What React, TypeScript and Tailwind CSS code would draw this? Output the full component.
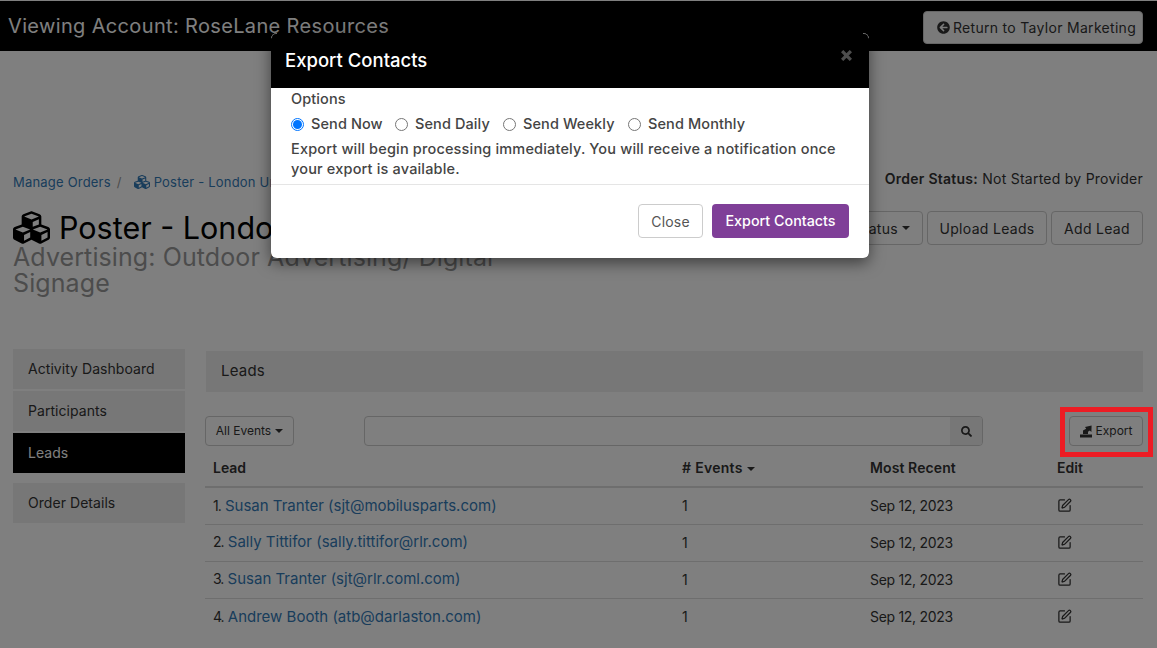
import { FaArrowCircleLeft, FaCubes, FaSearch } from 'react-icons/fa';
import { SquarePen } from 'lucide-react';

const leads = [
  { no: '1.', name: 'Susan Tranter (sjt@mobilusparts.com)' },
  { no: '2.', name: 'Sally Tittifor (sally.tittifor@rlr.com)' },
  { no: '3.', name: 'Susan Tranter (sjt@rlr.coml.com)' },
  { no: '4.', name: 'Andrew Booth (atb@darlaston.com)' },
];

const Caret = () => (
  <span className="inline-block ml-1 align-middle border-x-[4px] border-x-transparent border-t-[4px] border-t-current" />
);

const ExportIcon = () => (
  <svg viewBox="0 0 12 13" className="w-[12px] h-[13px]" fill="currentColor">
    <rect x="0" y="9.5" width="12" height="3" />
    <path d="M3 9 L3 5.4 L6.2 3.8 L5 2 L11.6 0.6 L11.4 7 L9.8 5.6 L8 6.8 L8 9 Z" />
  </svg>
);

const Radio = ({ checked = false }: { checked?: boolean }) =>
  checked ? (
    <span className="w-[13px] h-[13px] rounded-full border border-[#0075ff] mr-[7px] flex items-center justify-center">
      <span className="w-[9px] h-[9px] rounded-full bg-[#0075ff]" />
    </span>
  ) : (
    <span className="w-[13px] h-[13px] rounded-full border border-[#767676] mr-[7px]" />
  );

const App = () => {
  return (
    <div className="relative h-[648px] w-[1157px] overflow-hidden bg-white text-[#333] font-['Inter',sans-serif]">
      {/* Account bar */}
      <div className="mt-px h-[50px] bg-black flex items-center justify-between pl-[8px] pr-[14px]">
        <span className="text-[20px] tracking-[0.35px] text-white">Viewing Account: RoseLane Resources</span>
        <button className="mt-[3px] h-[33px] w-[220px] pl-[13px] rounded border border-[#ccc] bg-[#f5f5f5] text-[14px] tracking-[0.3px] text-[#333] flex items-center gap-[3px]">
          <FaArrowCircleLeft className="w-[13px] h-[13px]" />
          Return to Taylor Marketing
        </button>
      </div>

      <div className="pl-[13px] pr-[14px]">
        {/* Breadcrumb row */}
        <div className="mt-[118px] flex items-start justify-between">
          <div className="mt-[3px] flex items-center text-[#337ab7] text-[13px] tracking-[0.2px] leading-[20px]">
            <span>Manage Orders</span>
            <span className="ml-[6px] mr-[12px] text-[#999]">/</span>
            <FaCubes className="w-[16px] h-[16px] mr-[4px]" />
            <span>Poster - London Underground</span>
          </div>
          <div className="text-[14px] tracking-[0.25px] leading-[20px]">
            <b className="font-semibold">Order Status:</b> Not Started by Provider
          </div>
        </div>

        {/* Title row */}
        <div className="mt-[17px] flex items-start justify-between">
          <div className="w-[510px]">
            <h1 className="flex items-center text-[30.5px] leading-[36px] text-black whitespace-nowrap">
              <FaCubes className="w-[37px] h-[37px] mr-[9px]" />
              Poster - London Underground
            </h1>
            <div className="text-[25px] leading-[26px] tracking-[0.1px] text-[#999] -mt-[2px]">Advertising: Outdoor Advertising/ Digital Signage</div>
          </div>
          <div className="mt-[2px] flex gap-[4px] text-[14px] tracking-[0.3px]">
            <button className="h-[34px] px-[12px] border border-[#ccc] rounded flex items-center">
              Status
              <Caret />
            </button>
            <button className="h-[34px] w-[120px] border border-[#ccc] rounded">Upload Leads</button>
            <button className="h-[34px] w-[92px] border border-[#ccc] rounded">Add Lead</button>
          </div>
        </div>

        {/* Content */}
        <div className="mt-[53px] flex gap-[20px]">
          <div className="w-[172px] shrink-0 text-[14px] tracking-[0.05px]">
            <div className="h-[40px] mb-[2px] px-[15px] pb-[2px] flex items-center bg-[#eee]">Activity Dashboard</div>
            <div className="h-[40px] mb-[2px] px-[15px] pb-[2px] flex items-center bg-[#eee]">Participants</div>
            <div className="h-[40px] px-[15px] pb-[2px] flex items-center bg-black text-white">Leads</div>
            <div className="h-[40px] mt-[10px] px-[15px] pb-[2px] flex items-center bg-[#eee]">Order Details</div>
          </div>

          <div className="flex-1 min-w-0 pt-[2px]">
            <div className="h-[41px] ml-px px-[15px] flex items-center bg-[#eee] text-[15px] tracking-[0.2px]">Leads</div>
            <div className="mt-[24px] flex items-center">
              <button className="h-[30px] w-[89px] border border-[#ccc] rounded text-[12px] flex items-center justify-center">
                All Events
                <Caret />
              </button>
              <div className="ml-[70px] flex w-[619px] h-[30px] border border-[#ccc] rounded overflow-hidden">
                <div className="flex-1" />
                <div className="w-[32px] bg-[#eee] flex items-center justify-center">
                  <FaSearch className="w-[11px] h-[11px]" />
                </div>
              </div>
              <button className="ml-auto h-[30px] w-[74px] border border-[#ccc] rounded text-[12px] flex items-center justify-center gap-[4px]">
                <ExportIcon />
                Export
              </button>
            </div>

            <table className="mt-[3px] w-full text-[14px]">
              <thead>
                <tr className="h-[38px] border-b-2 border-[#ddd] text-left">
                  <th className="pl-[8px] w-[477px] font-semibold">Lead</th>
                  <th className="w-[188px] font-semibold tracking-[0.3px]">
                    # Events
                    <Caret />
                  </th>
                  <th className="w-[187px] font-semibold tracking-[0.1px]">Most Recent</th>
                  <th className="font-semibold">Edit</th>
                </tr>
              </thead>
              <tbody>
                {leads.map((lead) => (
                  <tr key={lead.no} className="h-[37px] border-b border-[#ddd] last:border-b-0">
                    <td className="pl-[8px] text-[15px]">
                      <span className="text-[14px] tracking-[-1px]">{lead.no}</span>{' '}
                      <span className="text-[#337ab7]">{lead.name}</span>
                    </td>
                    <td>1</td>
                    <td className="tracking-[-0.3px]">Sep 12, 2023</td>
                    <td>
                      <SquarePen className="w-[15px] h-[15px]" strokeWidth={2} />
                    </td>
                  </tr>
                ))}
              </tbody>
            </table>
          </div>
        </div>
      </div>

      {/* Backdrop */}
      <div className="absolute inset-0 bg-black/50" />

      {/* Modal */}
      <div className="absolute left-[271px] top-[33px] w-[598px] h-[225px] rounded-md bg-white overflow-hidden shadow-[0_5px_15px_rgba(0,0,0,0.5)]">
        <div className="relative h-[55px] bg-black text-white text-[18.5px] font-medium pl-[14px] pt-[14px]">
          Export Contacts
          <svg viewBox="0 0 10 10" className="absolute left-[570px] top-[17px] w-[11px] h-[11px] text-[#4d4d4d]" stroke="currentColor" strokeWidth="3">
            <path d="M1 1 L9 9 M9 1 L1 9" />
          </svg>
          <span className="absolute right-0 top-0 w-[6px] h-[5px] rounded-tr-[6px] border-t border-r border-[#777]" />
          <span className="absolute left-0 top-0 w-[6px] h-[5px] rounded-tl-[6px] border-t border-l border-[#777]" />
        </div>
        <div className="h-[97px] border-b border-[#e5e5e5] pl-[20px] pr-[19px] text-[#444] text-[14.5px] tracking-[0.1px] font-medium">
          <div className="leading-[22px]">Options</div>
          <div className="mt-[3px] flex items-center leading-[22px]">
            <label className="flex items-center w-[104px]">
              <Radio checked />
              Send Now
            </label>
            <label className="flex items-center w-[108px]">
              <Radio />
              Send Daily
            </label>
            <label className="flex items-center w-[125px]">
              <Radio />
              Send Weekly
            </label>
            <label className="flex items-center">
              <Radio />
              Send Monthly
            </label>
          </div>
          <p className="mt-[4px] leading-[20px] whitespace-nowrap tracking-[0.17px]">
            Export will begin processing immediately. You will receive a notification once
            <br />
            your export is available.
          </p>
        </div>
        <div className="flex justify-end gap-[9px] pt-[19px] pr-[20px]">
          <button className="h-[34px] w-[65px] rounded border border-[#ccc] bg-white text-[14px] tracking-[0.2px] text-[#555]">Close</button>
          <button className="h-[34px] w-[137px] rounded bg-[#7f3f98] text-[14.3px] font-medium text-white">Export Contacts</button>
        </div>
      </div>

      {/* Annotation */}
      <div className="absolute left-[1060px] top-[407px] w-[93px] h-[50px] border-[5px] border-[#ed1c24]" />
    </div>
  );
};

export default App;
